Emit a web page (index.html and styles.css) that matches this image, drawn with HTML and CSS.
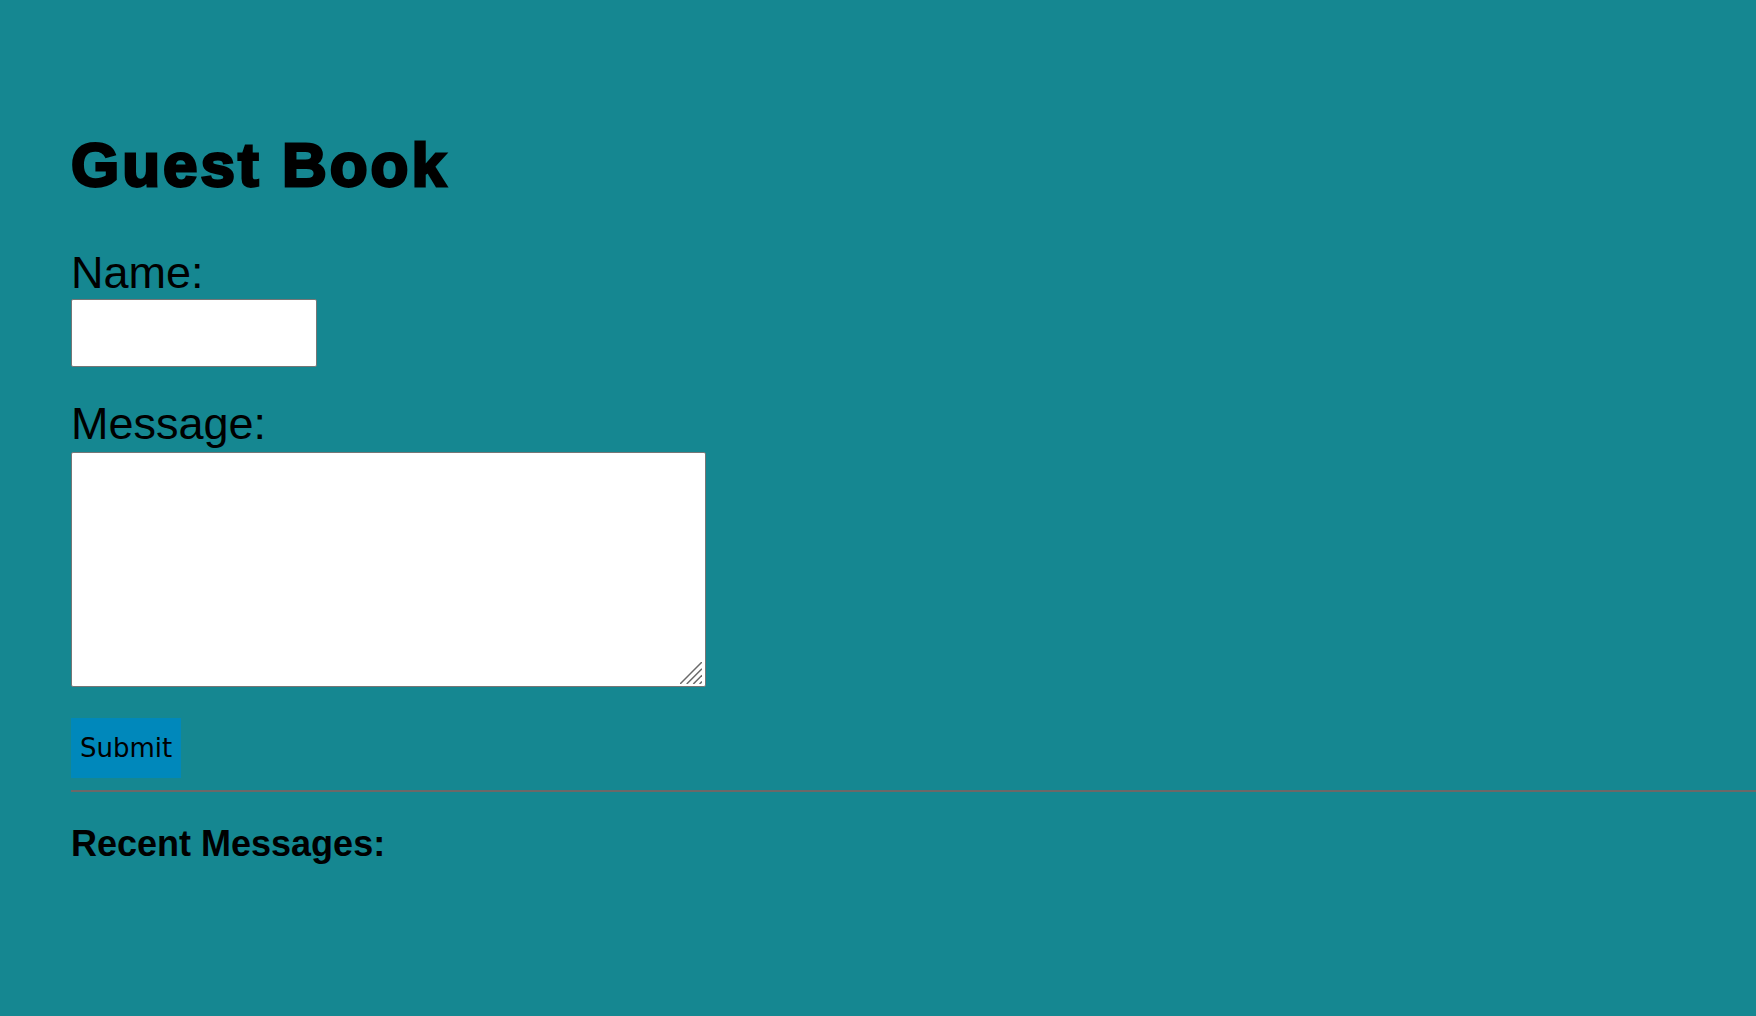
FILE: index.html
```html
<!DOCTYPE html>
<html lang="en">
<head>
<meta charset="utf-8">
<title>Guest Book</title>
<link rel="stylesheet" href="styles.css">
</head>
<body>
<main class="page">
  <h1 class="title">Guest Book</h1>
  <form class="guest-form">
    <label class="field-label" for="name">Name:</label>
    <input class="name-input" type="text" id="name" name="name">
    <label class="field-label message-label" for="message">Message:</label>
    <div class="message-wrap">
      <textarea class="message-input" id="message" name="message"></textarea>
      <svg class="grip" width="22" height="22" viewBox="0 0 22 22" aria-hidden="true">
        <line x1="22" y1="0" x2="0" y2="22"/>
        <line x1="22" y1="6.7" x2="6.7" y2="22"/>
        <line x1="22" y1="13.3" x2="13.3" y2="22"/>
        <line x1="22" y1="19.6" x2="19.6" y2="22"/>
      </svg>
    </div>
    <button class="submit-btn" type="submit">Submit</button>
  </form>
  <hr class="divider">
  <h3 class="recent-title">Recent Messages:</h3>
  <div class="messages"></div>
</main>
</body>
</html>
```
FILE: styles.css
```css
html, body {
  margin: 0;
  padding: 0;
  background: #158791;
}
body {
  font-family: "Liberation Sans", Arial, sans-serif;
  color: #000;
  min-height: 1016px;
  overflow: hidden;
}
.page {
  padding: 130px 0 0 71px;
  display: flex;
  flex-direction: column;
  align-items: flex-start;
}
.title {
  margin: 0;
  font-family: "Liberation Sans", Arial, sans-serif;
  font-weight: 700;
  font-size: 62px;
  line-height: 70px;
  -webkit-text-stroke: 2.8px #000;
  letter-spacing: 3px;
}
.guest-form {
  display: flex;
  flex-direction: column;
  align-items: flex-start;
  margin-top: 46.9px;
}
.field-label {
  font-size: 45px;
  line-height: 51px;
  margin-bottom: 1px;
}
.message-label {
  margin-top: 31px;
  margin-bottom: 2.8px;
}
.name-input {
  box-sizing: border-box;
  width: 246px;
  height: 68px;
  margin: 0;
  border: 1px solid #767676;
  border-radius: 2px;
  background: #fff;
  font-size: 26px;
  padding: 4px 8px;
}
.message-wrap {
  position: relative;
  width: 635px;
  height: 235.5px;
}
.message-input {
  display: block;
  box-sizing: border-box;
  width: 635px;
  height: 235.5px;
  margin: 0;
  border: 1px solid #767676;
  border-radius: 2px;
  background: #fff;
  font-size: 20px;
  padding: 4px;
  resize: none;
}
.grip {
  position: absolute;
  right: 4px;
  bottom: 3px;
  pointer-events: none;
}
.grip line {
  stroke: #6a6a6a;
  stroke-width: 1.5;
}
.submit-btn {
  margin-top: 31px;
  border: none;
  border-radius: 0;
  background: #0088bb;
  color: #000;
  font-family: "DejaVu Sans", sans-serif;
  font-size: 26px;
  line-height: 30px;
  padding: 15px 9px;
}
.divider {
  align-self: stretch;
  margin: 12px 0 0 0;
  height: 0;
  border: none;
  border-top: 2px solid #6b6868;
}
.recent-title {
  margin: 31px 0 0 0;
  font-size: 36px;
  line-height: 41px;
  font-weight: 700;
}
```
